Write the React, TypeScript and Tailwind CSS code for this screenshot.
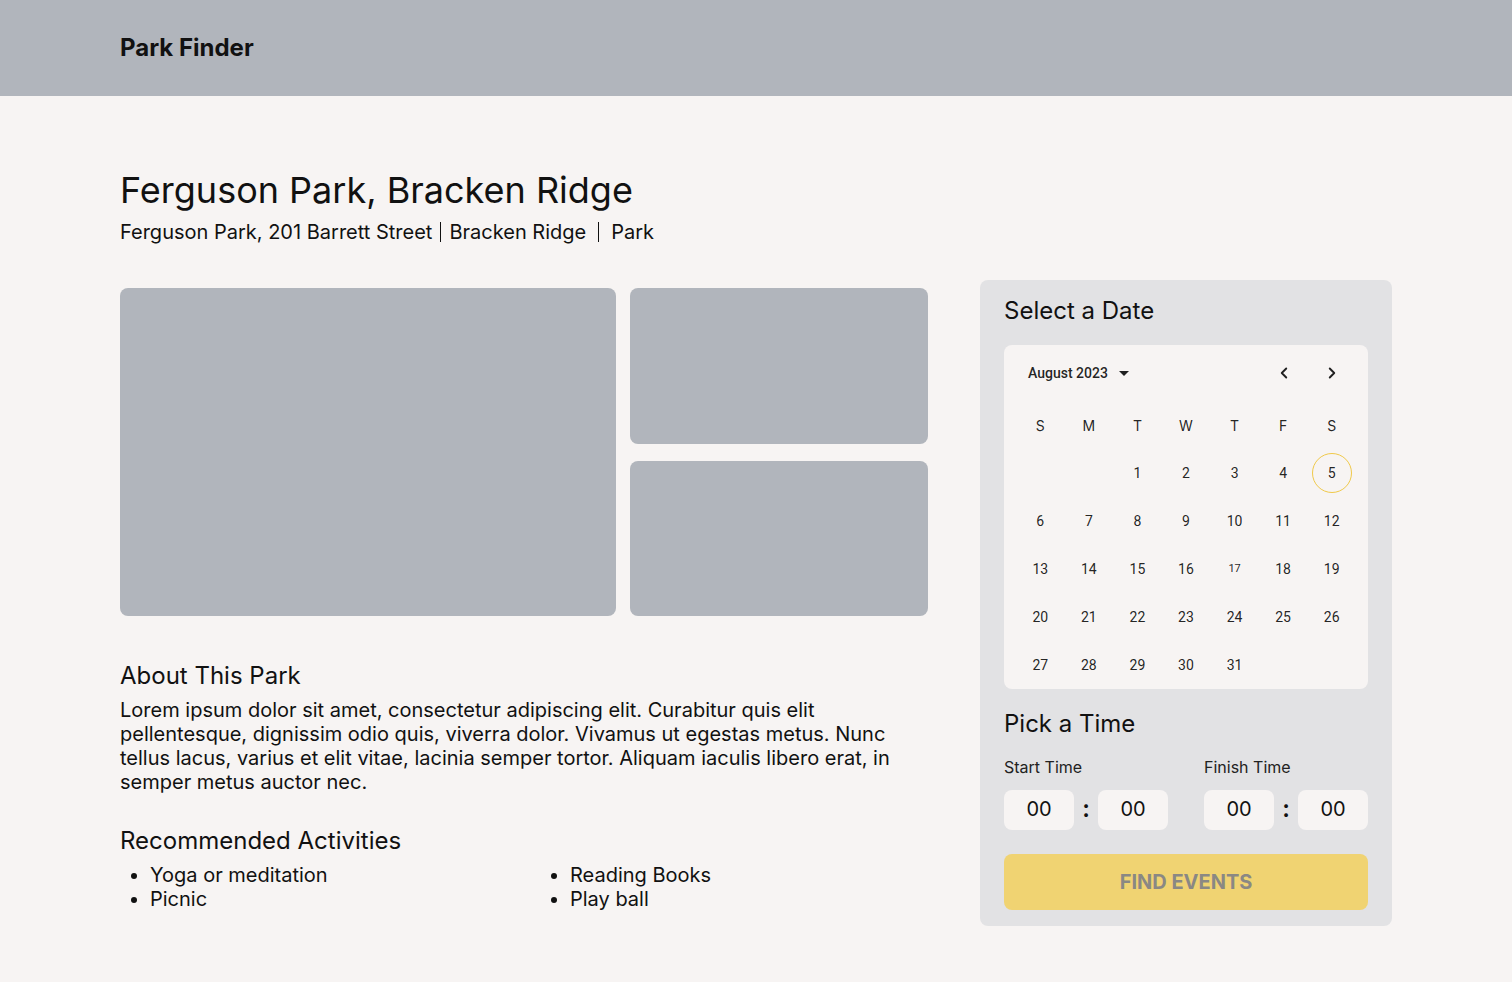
import React from 'react';
import { ChevronLeft, ChevronRight } from 'lucide-react';

const weekdays = ['S', 'M', 'T', 'W', 'T', 'F', 'S'];

// August 2023 starts on a Tuesday
const days: (number | null)[] = [
  null, null, 1, 2, 3, 4, 5,
  6, 7, 8, 9, 10, 11, 12,
  13, 14, 15, 16, 17, 18, 19,
  20, 21, 22, 23, 24, 25, 26,
  27, 28, 29, 30, 31, null, null,
];

const TimeInput = () => (
  <div className="flex items-center">
    <div className="w-[70px] h-10 rounded-lg bg-[#f7f4f3] flex items-center justify-center text-[20px] leading-none pb-[3px]">
      00
    </div>
    <div className="w-6 text-center text-[24px] font-semibold leading-none pb-[2px]">:</div>
    <div className="w-[70px] h-10 rounded-lg bg-[#f7f4f3] flex items-center justify-center text-[20px] leading-none pb-[3px]">
      00
    </div>
  </div>
);

const Calendar = () => (
  <div className="mt-[18px] rounded-lg bg-[#f7f4f3] px-3 font-['Roboto',sans-serif] text-black/[0.87]">
    <div className="h-14 flex items-center justify-between pl-3">
      <div className="flex items-center text-[14px] font-medium">
        <span>August 2023</span>
        <svg viewBox="0 0 24 24" className="w-6 h-6 ml-1" fill="currentColor">
          <path d="M7 10l5 5 5-5z" />
        </svg>
      </div>
      <div className="flex items-center">
        <button className="w-12 flex justify-center">
          <ChevronLeft size={18} strokeWidth={2.5} />
        </button>
        <button className="w-12 flex justify-center">
          <ChevronRight size={18} strokeWidth={2.5} />
        </button>
      </div>
    </div>
    <div className="grid grid-cols-7">
      {weekdays.map((d, i) => (
        <div key={i} className="h-12 flex items-center justify-center text-[14px] font-['Inter',sans-serif]">
          {d}
        </div>
      ))}
      {days.map((d, i) => (
        <div key={i} className="h-12 flex items-center justify-center">
          {d === 5 ? (
            <span className="w-10 h-10 rounded-full border border-[#f0c94a] flex items-center justify-center text-[14px]">
              5
            </span>
          ) : d === 17 ? (
            <span className="text-[11px]">{d}</span>
          ) : (
            <span className="text-[14px]">{d}</span>
          )}
        </div>
      ))}
    </div>
  </div>
);

export default function App() {
  return (
    <div className="min-h-screen bg-[#f7f4f3] font-['Inter',sans-serif] text-[#111]">
      <header className="h-24 bg-[#b1b5bc] flex items-center px-[120px]">
        <h1 className="text-[24px] font-bold">Park Finder</h1>
      </header>

      <main className="px-[120px] pt-[74px] pb-14">
        <h2 className="text-[36px] leading-10">Ferguson Park, Bracken Ridge</h2>
        <p className="mt-2 text-[20px] leading-7 flex items-center">
          Ferguson Park, 201 Barrett Street
          <span className="inline-block w-px h-5 bg-[#111] mx-2" />
          Bracken Ridge
          <span className="inline-block w-px h-5 bg-[#111] mx-3" />
          Park
        </p>

        <div className="mt-[34px] flex gap-[52px]">
          <div className="w-[808px] pt-2">
            <div className="grid grid-cols-[496px_298px] gap-[14px] h-[328px]">
              <div className="rounded-lg bg-[#b1b5bc]" />
              <div className="grid grid-rows-2 gap-[17px]">
                <div className="rounded-lg bg-[#b1b5bc]" />
                <div className="rounded-lg bg-[#b1b5bc]" />
              </div>
            </div>

            <h3 className="mt-11 text-[24px] leading-8">About This Park</h3>
            <p className="mt-[6px] w-[780px] text-[20px] leading-6">
              Lorem ipsum dolor sit amet, consectetur adipiscing elit. Curabitur quis elit pellentesque, dignissim odio quis, viverra dolor. Vivamus ut egestas metus. Nunc tellus lacus, varius et elit vitae, lacinia semper tortor. Aliquam iaculis libero erat, in semper metus auctor nec.
            </p>

            <h3 className="mt-[31px] text-[24px] leading-8">Recommended Activities</h3>
            <div className="mt-[6px] grid grid-cols-[420px_1fr] text-[20px] leading-6">
              <ul className="list-disc pl-[30px]">
                <li>Yoga or meditation</li>
                <li>Picnic</li>
              </ul>
              <ul className="list-disc pl-[30px]">
                <li>Reading Books</li>
                <li>Play ball</li>
              </ul>
            </div>
          </div>

          <aside className="w-[412px] rounded-lg bg-[#e2e2e4] px-6 pt-[15px] pb-4 self-start">
            <h3 className="text-[24px] leading-8">Select a Date</h3>
            <Calendar />

            <h3 className="mt-[19px] text-[24px] leading-8">Pick a Time</h3>
            <div className="mt-[15px] grid grid-cols-2 gap-9">
              <div>
                <div className="text-[16px] leading-6 text-[#222]">Start Time</div>
                <div className="mt-[11px]">
                  <TimeInput />
                </div>
              </div>
              <div>
                <div className="text-[16px] leading-6 text-[#222]">Finish Time</div>
                <div className="mt-[11px]">
                  <TimeInput />
                </div>
              </div>
            </div>

            <button className="mt-6 w-full h-14 rounded-lg bg-[#f0d372] text-[20px] font-bold text-[#8a8884]">
              FIND EVENTS
            </button>
          </aside>
        </div>
      </main>
    </div>
  );
}
